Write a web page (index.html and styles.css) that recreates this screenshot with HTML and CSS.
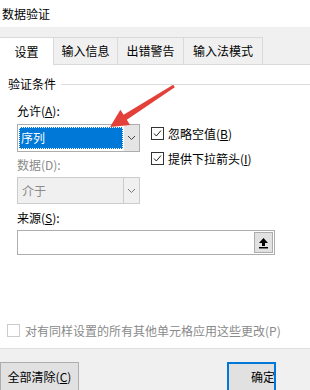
FILE: index.html
```html
<!DOCTYPE html>
<html lang="zh-CN">
<head>
<meta charset="utf-8">
<title>数据验证</title>
<link rel="stylesheet" href="styles.css">
</head>
<body>
<div class="dialog">
  <div class="titlebar">数据验证</div>
  <div class="tabs">
    <div class="tab active t1">设置</div>
    <div class="tab t2">输入信息</div>
    <div class="tab t3">出错警告</div>
    <div class="tab t4">输入法模式</div>
  </div>
  <div class="panel">
    <div class="group-head"><span>验证条件</span><div class="rule"></div></div>
    <div class="criteria">
      <div class="left-col">
        <div class="label">允许(<u>A</u>):</div>
        <div class="combo focus">
          <div class="combo-value"><span class="sel">序列</span></div>
          <div class="combo-arrow"><svg width="9" height="6" viewBox="0 0 9 6"><path d="M1 1 L4.5 4.5 L8 1" fill="none" stroke="#444" stroke-width="1"/></svg></div>
        </div>
        <div class="label disabled">数据(D):</div>
        <div class="combo off">
          <div class="combo-value">介于</div>
          <div class="combo-arrow"><svg width="9" height="6" viewBox="0 0 9 6"><path d="M1 1 L4.5 4.5 L8 1" fill="none" stroke="#777" stroke-width="1"/></svg></div>
        </div>
      </div>
      <div class="checks">
        <div class="check"><span class="box"><svg width="13" height="13" viewBox="0 0 13 13"><rect x="0.5" y="0.5" width="12" height="12" fill="#fff" stroke="#333"/><path d="M3 6.5 L5.3 9 L10 3.5" fill="none" stroke="#222" stroke-width="1"/></svg></span>忽略空值(<u>B</u>)</div>
        <div class="check"><span class="box"><svg width="13" height="13" viewBox="0 0 13 13"><rect x="0.5" y="0.5" width="12" height="12" fill="#fff" stroke="#333"/><path d="M3 6.5 L5.3 9 L10 3.5" fill="none" stroke="#222" stroke-width="1"/></svg></span>提供下拉箭头(<u>I</u>)</div>
      </div>
    </div>
    <div class="label src-label">来源(<u>S</u>):</div>
    <div class="source">
      <div class="src-btn"><svg width="11" height="12" viewBox="0 0 11 12"><path d="M5.5 1 L10 6 L7 6 L7 9 L4 9 L4 6 L1 6 Z" fill="#000"/><rect x="1" y="10" width="9" height="1.5" fill="#000"/></svg></div>
    </div>
    <div class="check apply-all"><span class="box"><svg width="13" height="13" viewBox="0 0 13 13"><rect x="0.5" y="0.5" width="12" height="12" fill="#fff" stroke="#cccccc"/></svg></span>对有同样设置的所有其他单元格应用这些更改(P)</div>
    <svg class="red-arrow" width="310" height="290" viewBox="0 65 310 290">
      <path d="M110 127 L120.4 109.7 L123.6 114.8 L173.2 84.7 L174.8 87.3 L126.8 119.8 L130 124.9 Z" fill="#e4403a"/>
    </svg>
  </div>
  <div class="footer">
    <div class="btn clear">全部清除(<u>C</u>)</div>
    <div class="btn ok"><span>确定</span></div>
  </div>
</div>
</body>
</html>
```
FILE: styles.css
```css
html, body {
  margin: 0;
  padding: 0;
}
body {
  width: 310px;
  height: 390px;
  overflow: hidden;
  font-family: "Noto Sans CJK SC", "Microsoft YaHei", sans-serif;
  font-size: 12px;
  line-height: 16px;
  color: #000;
  background: #f0f0f0;
}
.dialog {
  width: 310px;
  height: 390px;
  display: flex;
  flex-direction: column;
}
.titlebar {
  height: 27px;
  line-height: 27px;
  padding-left: 2px;
  background: #fff;
  flex: none;
}
.tabs {
  height: 38px;
  box-sizing: border-box;
  border-bottom: 1px solid #d9d9d9;
  background: #f0f0f0;
  display: flex;
  align-items: flex-end;
  flex: none;
}
.tab {
  height: 27px;
  box-sizing: border-box;
  border-top: 1px solid #d9d9d9;
  border-right: 1px solid #d9d9d9;
  background: #f0f0f0;
  display: flex;
  align-items: center;
  justify-content: center;
}
.tab.active {
  height: 28px;
  margin-bottom: -1px;
  background: #fff;
}
.t1 { width: 54px; }
.t2 { width: 64px; }
.t3 { width: 66px; }
.t4 { width: 79px; }
.panel {
  position: relative;
  height: 283px;
  flex: none;
  background: #fff;
  border-bottom: 1px solid #dfdfdf;
  padding-left: 8px;
  overflow: hidden;
}
.group-head {
  margin-top: 11px;
  display: flex;
  align-items: center;
  gap: 5px;
}
.rule {
  flex: 1;
  height: 1px;
  background: #dcdcdc;
}
.criteria {
  margin-top: 11px;
  margin-left: 9px;
  display: flex;
}
.left-col {
  width: 123px;
  display: flex;
  flex-direction: column;
}
.label.disabled {
  color: #8a8a8a;
}
.combo {
  display: flex;
  box-sizing: border-box;
  border: 1px solid #adadad;
}
.combo.focus {
  margin-top: 5px;
  height: 28px;
  background: #e5e5e5;
}
.combo.focus .combo-value {
  flex: 1;
  background: #fff;
  padding: 2px 1px 2px 1px;
  display: flex;
}
.sel {
  flex: 1;
  background: #0078d7;
  color: #fff;
  outline: 1px dotted #fff;
  outline-offset: -1px;
  padding-left: 2px;
  line-height: 22px;
}
.combo.off {
  margin-top: 4px;
  height: 27px;
  background: #f0f0f0;
  border-color: #cccccc;
  color: #8a8a8a;
}
.combo.off .combo-value {
  flex: 1;
  padding-left: 4px;
  line-height: 25px;
  border-right: 1px solid #cccccc;
}
.combo-arrow {
  width: 15px;
  display: flex;
  align-items: center;
  justify-content: center;
}
.left-col .label.disabled {
  margin-top: 5px;
}
.checks {
  margin-left: 11px;
  padding-top: 18px;
  display: flex;
  flex-direction: column;
}
.check {
  height: 25px;
  display: flex;
  align-items: center;
}
.box {
  width: 13px;
  height: 13px;
  margin-right: 4px;
  display: flex;
}
.src-label {
  margin-top: 6px;
  margin-left: 9px;
}
.source {
  margin-top: 4px;
  margin-left: 9px;
  width: 258px;
  height: 25px;
  box-sizing: border-box;
  border: 1px solid #adadad;
  background: #fff;
  display: flex;
  justify-content: flex-end;
  align-items: center;
  padding-right: 1px;
}
.src-btn {
  width: 19px;
  height: 21px;
  background: #e1e1e1;
  border: 1px solid #adadad;
  box-sizing: border-box;
  display: flex;
  align-items: center;
  justify-content: center;
}
.apply-all {
  margin-top: 63px;
  margin-left: -1px;
  color: #8a8a8a;
}
.apply-all .box {
  margin-right: 5px;
}
.red-arrow {
  position: absolute;
  left: 0;
  top: 0;
  pointer-events: none;
}
.footer {
  flex: 1;
  background: #f0f0f0;
  display: flex;
  align-items: flex-start;
  padding-top: 13px;
}
.btn {
  height: 30px;
  box-sizing: border-box;
  background: #e1e1e1;
  border: 1px solid #adadad;
  display: flex;
  align-items: center;
  flex: none;
}
.btn.clear {
  width: 79px;
  justify-content: center;
}
.btn.ok {
  width: 49px;
  margin-left: 148px;
  border: 2px solid #0078d7;
  padding-left: 22px;
  overflow: hidden;
  white-space: nowrap;
}
u {
  text-decoration: underline;
  text-underline-offset: 1px;
}
```
